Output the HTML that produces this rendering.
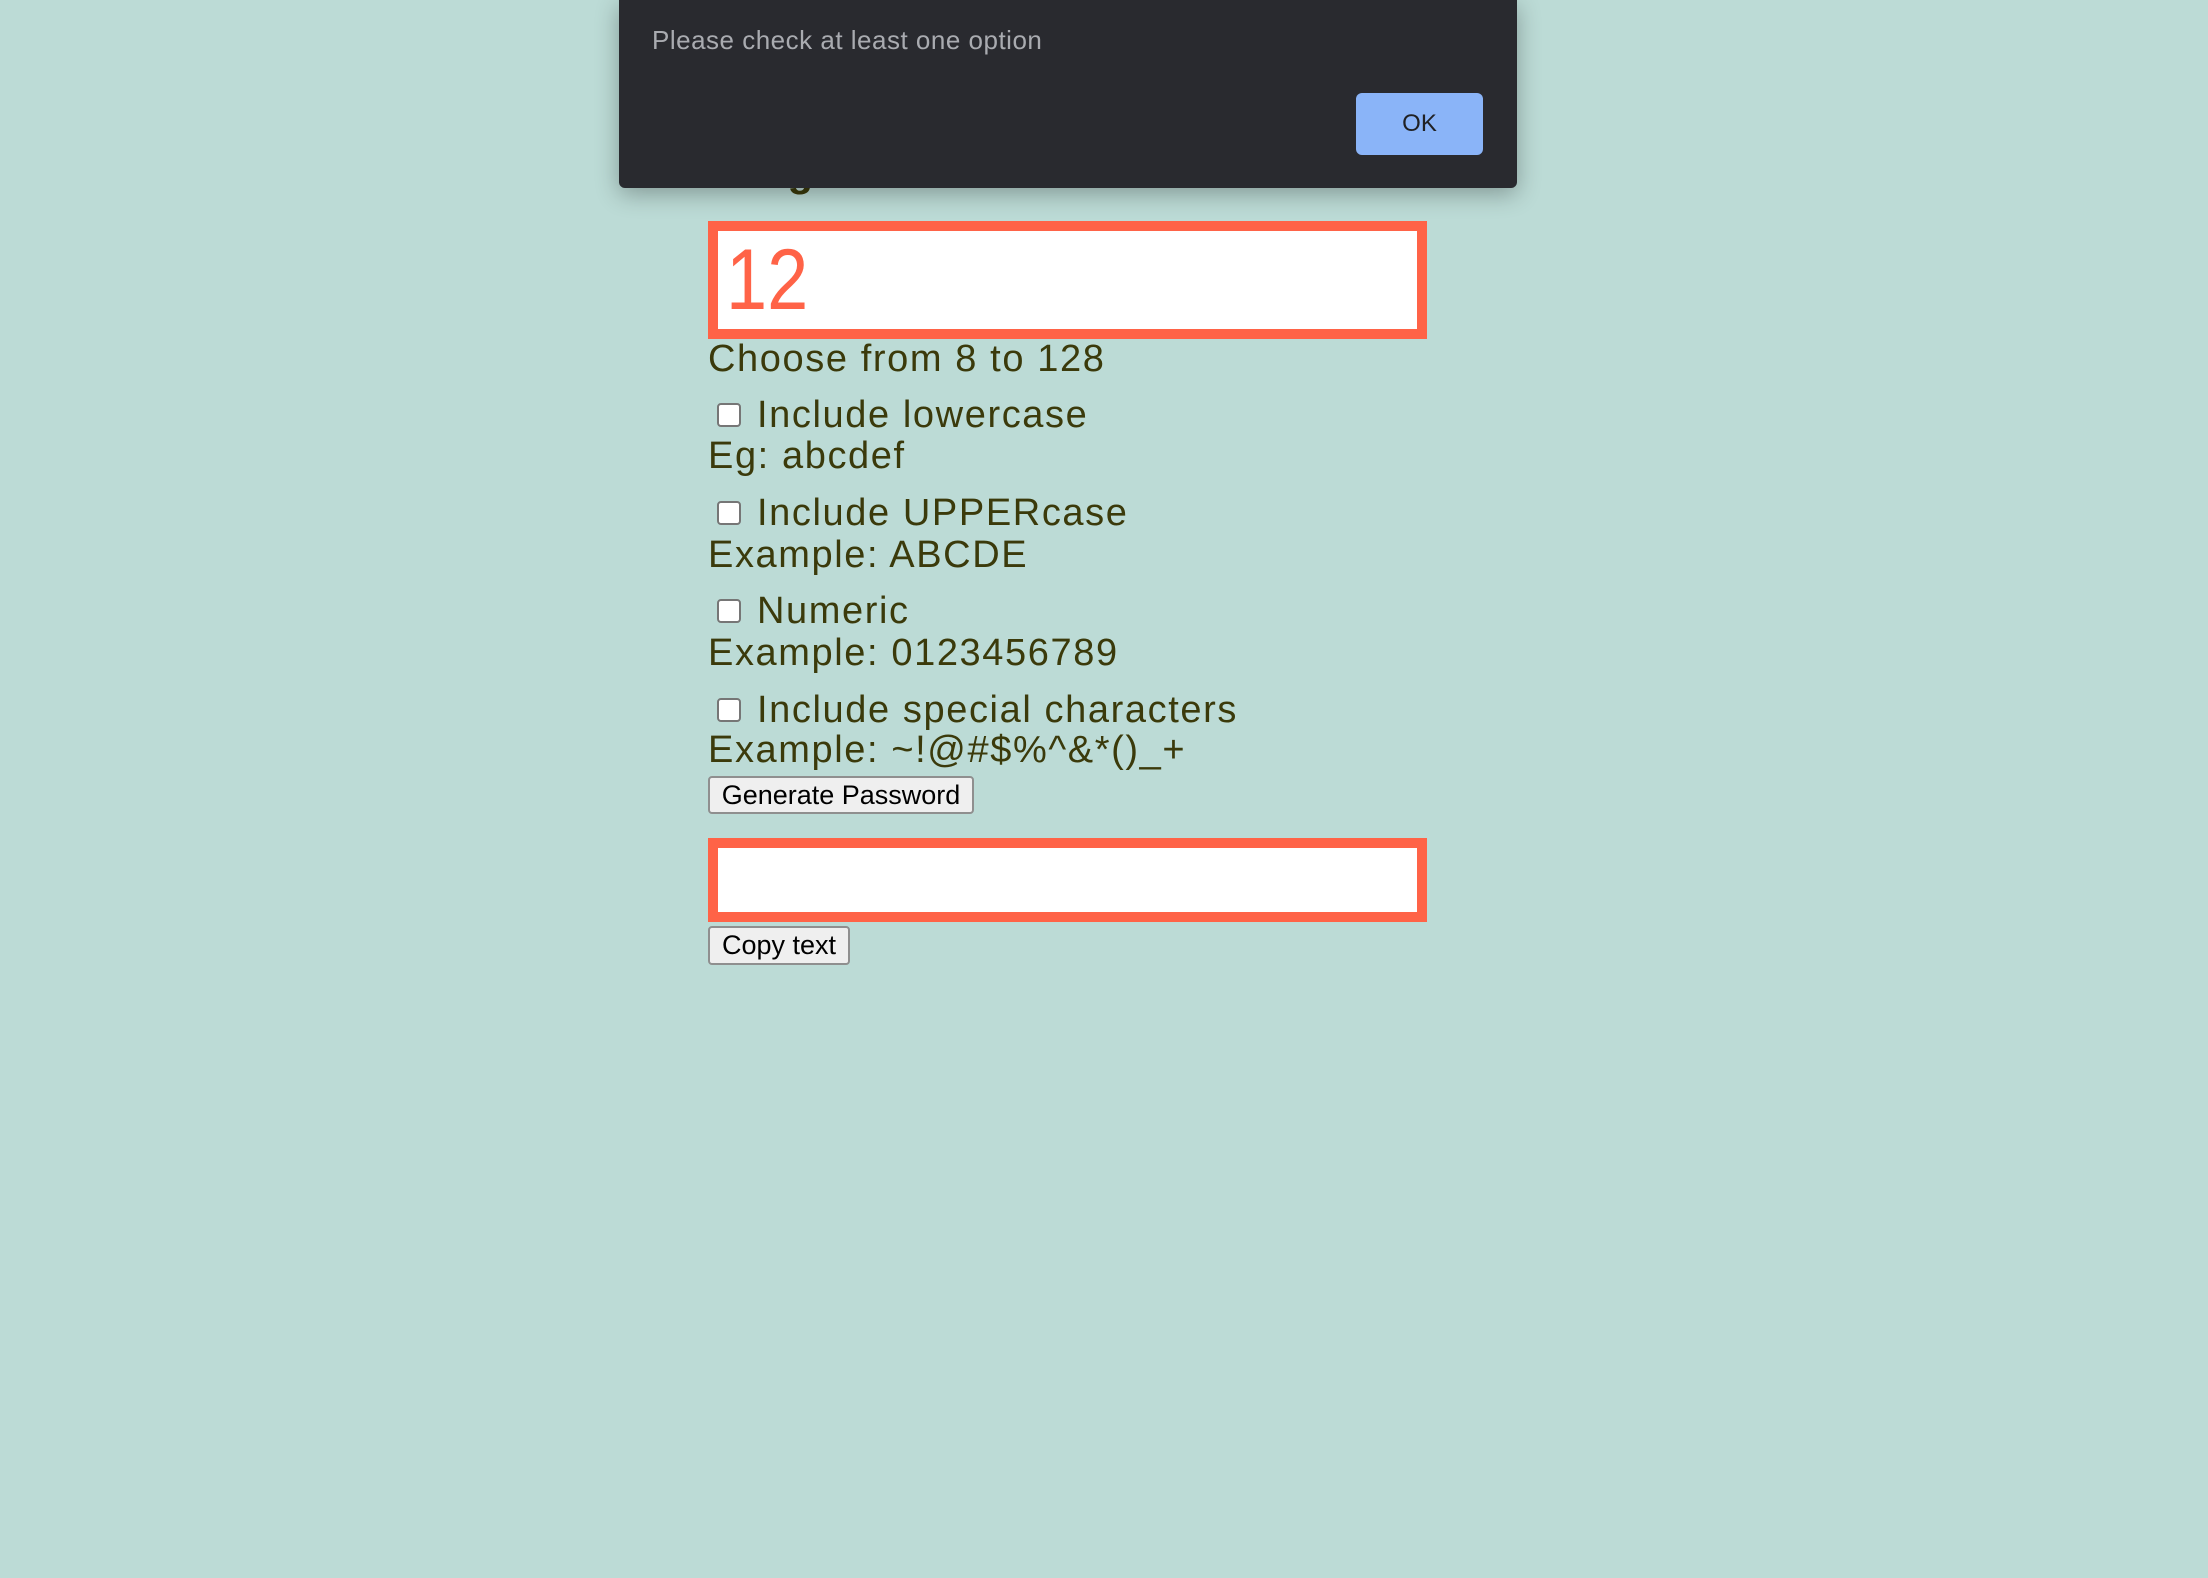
<!DOCTYPE html>
<html><head><meta charset="utf-8"><style>
html,body{margin:0;padding:0}
body{width:2208px;height:1578px;background:#bcdbd6;position:relative;overflow:hidden;font-family:"Liberation Sans",sans-serif}
.t{position:absolute;left:708px;color:#3b3a0b;font-size:38px;line-height:44px;white-space:nowrap;transform:translateY(-50%);letter-spacing:1.6px}
.cb{position:absolute;left:717px;width:20px;height:20px;border:2px solid #767676;border-radius:4px;background:#fff;transform:translateY(-50%)}
.box{position:absolute;left:708px;width:699px;border:10px solid #ff6347;background:#fff}
.btn{position:absolute;left:708px;background:#efefef;border:2px solid #8f8f8f;border-radius:4px;font-size:27px;box-sizing:border-box;color:#000;text-align:center;line-height:34px}
#dlg{position:absolute;left:619px;top:0;width:898px;height:188px;background:#292a2f;border-radius:0 0 6px 6px;box-shadow:0 6px 24px rgba(0,0,0,.3)}
</style></head><body>
<div class="t" style="top:172px;font-weight:bold;font-size:42px">Length of Password</div>
<div class="box" style="top:221px;height:98px"><div style="position:absolute;left:8px;top:4px;font-size:86px;line-height:90px;color:#ff6347;transform:scaleX(0.86);transform-origin:left">12</div></div>
<div class="t" style="top:359px">Choose from 8 to 128</div>
<div class="cb" style="top:415px"></div><div class="t" style="top:415px;left:757px">Include lowercase</div>
<div class="t" style="top:456px">Eg: abcdef</div>
<div class="cb" style="top:513px"></div><div class="t" style="top:513px;left:757px">Include UPPERcase</div>
<div class="t" style="top:555px">Example: ABCDE</div>
<div class="cb" style="top:611px"></div><div class="t" style="top:611px;left:757px">Numeric</div>
<div class="t" style="top:653px">Example: 0123456789</div>
<div class="cb" style="top:710px"></div><div class="t" style="top:710px;left:757px">Include special characters</div>
<div class="t" style="top:750px">Example: ~!@#$%^&amp;*()_+</div>
<div class="btn" style="top:776px;width:266px;height:38px">Generate Password</div>
<div class="box" style="top:838px;height:64px"></div>
<div class="btn" style="top:926px;width:142px;height:39px">Copy text</div>
<div id="dlg">
<div style="position:absolute;left:33px;top:25px;font-size:26px;letter-spacing:0.5px;color:#a9abb0">Please check at least one option</div>
<div style="position:absolute;left:737px;top:93px;width:127px;height:62px;background:#8ab4f8;border-radius:6px;color:#202124;font-size:24px;line-height:62px;text-align:center">OK</div>
</div>
</body></html>
